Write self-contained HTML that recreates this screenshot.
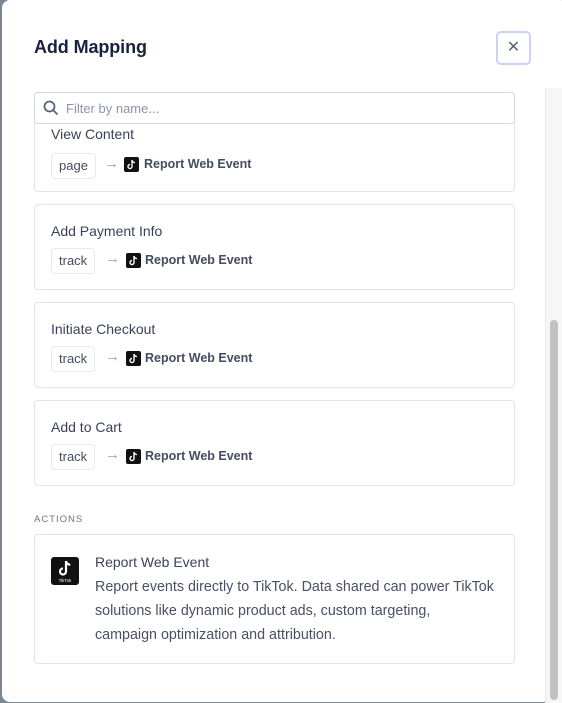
<!DOCTYPE html>
<html><head><style>
*{box-sizing:border-box;margin:0;padding:0}
body{width:562px;height:703px;background:#7b8694;font-family:"Liberation Sans",sans-serif;position:relative;overflow:hidden}
.modal{position:absolute;left:2px;top:0;width:566px;height:702px;background:#fff;border-radius:8px}
h1{position:absolute;left:32px;top:37px;font-size:18px;font-weight:600;color:#1a2140;letter-spacing:-0.1px}
.close{position:absolute;left:494px;top:31px;width:35px;height:34px;border:2px solid #c9d3f5;border-radius:5px;color:#5b6478;font-size:16px;text-align:center;line-height:30px}
.track{position:absolute;left:545px;top:88px;width:17px;height:615px;background:#f6f6f6;border-left:1px solid #e8e8e8}
.thumb{position:absolute;left:550px;top:320px;width:8px;height:380px;background:#c1c1c1;border-radius:4px}
.search{position:absolute;left:34px;top:92px;width:481px;height:32px;border:1px solid #d6d8e0;border-radius:4px;background:#fff;z-index:2}
.search span{position:absolute;left:31px;top:8px;font-size:13px;color:#8e94a8}
.card{position:absolute;left:34px;width:481px;height:86px;border:1px solid #e3e4ec;border-radius:4px}
.card .t{position:absolute;left:16px;top:18px;font-size:14px;color:#3b4257}
.pill{position:absolute;left:16px;top:43px;height:26px;padding:0 7px;border:1px solid #e8e9ef;border-radius:4px;font-size:13px;color:#454c60;line-height:24px}
.arr{position:absolute;top:45px;font-size:15px;color:#9aa0b4}
.ic{position:absolute;top:48px;width:15px;height:15px;background:#111;border-radius:2px}
.ev{position:absolute;top:48px;font-size:12.5px;font-weight:bold;color:#454c60}
.lab{position:absolute;left:34px;top:514px;font-size:9.5px;letter-spacing:1px;color:#6d7386}
.act{position:absolute;left:34px;top:534px;width:481px;height:130px;border:1px solid #e3e4ec;border-radius:4px}
.act .t{position:absolute;left:60px;top:19px;font-size:14px;color:#3b4257;font-weight:500}
.act .d{position:absolute;left:60px;top:40px;width:415px;font-size:14.3px;line-height:24px;color:#4a5063;white-space:nowrap}
.big{position:absolute;left:16px;top:22px;width:28px;height:28px;background:#111;border-radius:3px}
</style></head><body>
<div class="modal">
<h1>Add Mapping</h1>
<div class="close">✕</div>
</div>
<div class="track"></div><div class="thumb"></div>
<div class="search"><svg style="position:absolute;left:8px;top:7px" width="16" height="16" viewBox="0 0 16 16"><circle cx="6.5" cy="6.5" r="5" fill="none" stroke="#5b6478" stroke-width="1.8"/><path d="M10.3 10.3L14.5 14.5" stroke="#5b6478" stroke-width="1.8"/></svg><span>Filter by name...</span></div>

<div class="card" style="top:106px"><div class="t" style="top:19px">View Content</div><div class="pill" style="top:46px">page</div><div class="arr" style="left:69px;top:48px">→</div><div class="ic" style="left:89px;top:50px"><svg width="15" height="15" viewBox="0 0 15 15"><path d="M8 3v6.5a2 2 0 1 1-2-2M8 3c.3 1.5 1.4 2.5 3 2.6" fill="none" stroke="#fff" stroke-width="1.4"/></svg></div><div class="ev" style="left:109px;top:50px">Report Web Event</div></div>

<div class="card" style="top:204px"><div class="t">Add Payment Info</div><div class="pill">track</div><div class="arr" style="left:70px">→</div><div class="ic" style="left:91px"><svg width="15" height="15" viewBox="0 0 15 15"><path d="M8 3v6.5a2 2 0 1 1-2-2M8 3c.3 1.5 1.4 2.5 3 2.6" fill="none" stroke="#fff" stroke-width="1.4"/></svg></div><div class="ev" style="left:110px">Report Web Event</div></div>
<div class="card" style="top:302px"><div class="t">Initiate Checkout</div><div class="pill">track</div><div class="arr" style="left:70px">→</div><div class="ic" style="left:91px"><svg width="15" height="15" viewBox="0 0 15 15"><path d="M8 3v6.5a2 2 0 1 1-2-2M8 3c.3 1.5 1.4 2.5 3 2.6" fill="none" stroke="#fff" stroke-width="1.4"/></svg></div><div class="ev" style="left:110px">Report Web Event</div></div>
<div class="card" style="top:400px"><div class="t">Add to Cart</div><div class="pill">track</div><div class="arr" style="left:70px">→</div><div class="ic" style="left:91px"><svg width="15" height="15" viewBox="0 0 15 15"><path d="M8 3v6.5a2 2 0 1 1-2-2M8 3c.3 1.5 1.4 2.5 3 2.6" fill="none" stroke="#fff" stroke-width="1.4"/></svg></div><div class="ev" style="left:110px">Report Web Event</div></div>

<div class="lab">ACTIONS</div>
<div class="act"><div class="big"><svg width="28" height="28" viewBox="0 0 28 28"><path d="M15 4v10.5a3 3 0 1 1-3-3M15 4c.4 2.2 2 3.6 4.3 3.8" fill="none" stroke="#fff" stroke-width="2.2"/><text x="14" y="25" font-size="4.5" fill="#fff" text-anchor="middle" font-family="Liberation Sans">TikTok</text></svg></div><div class="t">Report Web Event</div><div class="d">Report events directly to TikTok. Data shared can power TikTok<br>solutions like dynamic product ads, custom targeting,<br>campaign optimization and attribution.</div></div>
</body></html>
